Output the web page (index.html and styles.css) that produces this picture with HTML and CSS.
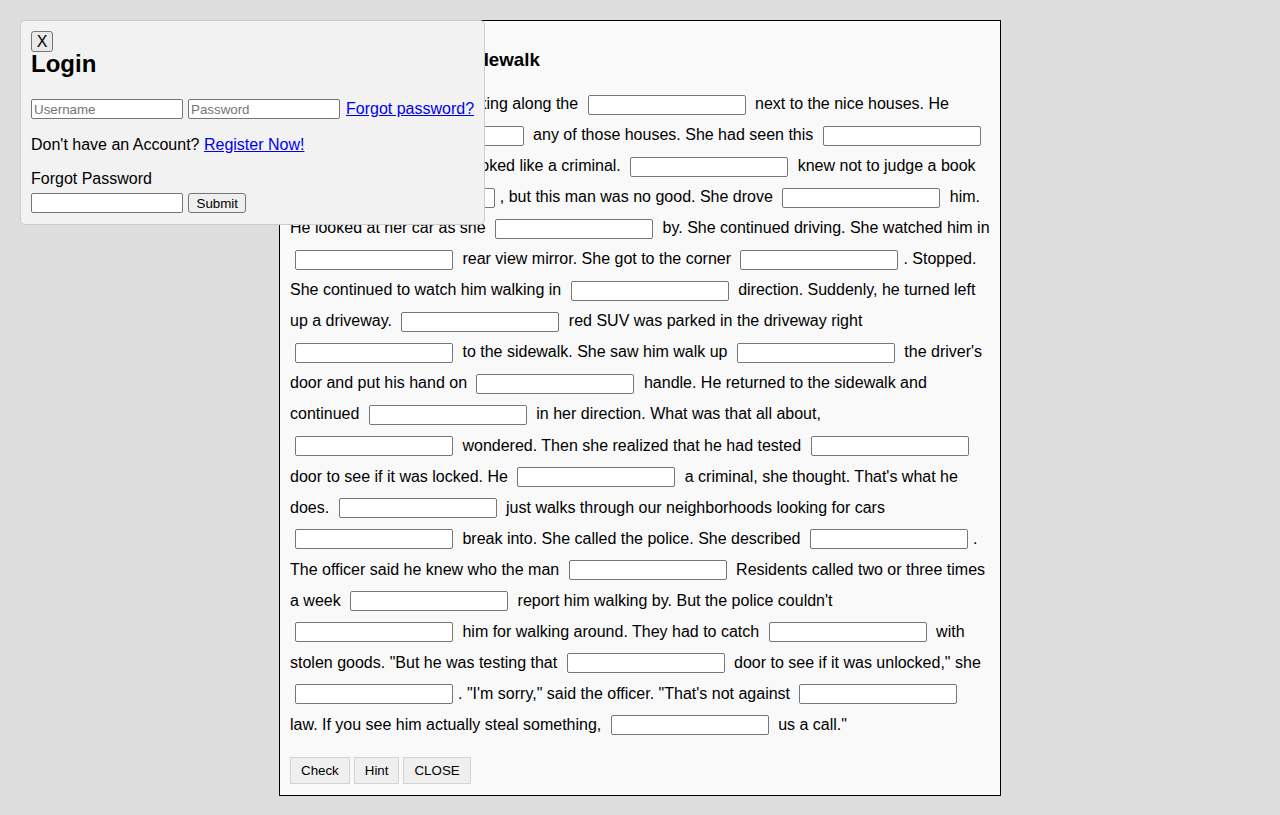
FILE: index.html
```html
<!DOCTYPE html>
<html lang="en">
<head>
<meta charset="utf-8">
<title>Story</title>
<link rel="stylesheet" href="styles.css">
</head>
<body>
<div class="panel">
  <h3 class="title">A Stranger On Our Sidewalk</h3>
  <p class="story">Mrs. Jones saw a man walking along the <input class="blank" type="text"> next to the nice houses. He didn't live <input class="blank" type="text"> any of those houses. She had seen this <input class="blank" type="text"> several times before. He looked like a criminal. <input class="blank" type="text"> knew not to judge a book by its <input class="blank" type="text">, but this man was no good. She drove <input class="blank" type="text"> him. He looked at her car as she <input class="blank" type="text"> by. She continued driving. She watched him in <input class="blank" type="text"> rear view mirror. She got to the corner <input class="blank" type="text">. Stopped. She continued to watch him walking in <input class="blank" type="text"> direction. Suddenly, he turned left up a driveway. <input class="blank" type="text"> red SUV was parked in the driveway right <input class="blank" type="text"> to the sidewalk. She saw him walk up <input class="blank" type="text"> the driver's door and put his hand on <input class="blank" type="text"> handle. He returned to the sidewalk and continued <input class="blank" type="text"> in her direction. What was that all about, <input class="blank" type="text"> wondered. Then she realized that he had tested <input class="blank" type="text"> door to see if it was locked. He <input class="blank" type="text"> a criminal, she thought. That's what he does. <input class="blank" type="text"> just walks through our neighborhoods looking for cars <input class="blank" type="text"> break into. She called the police. She described <input class="blank" type="text">. The officer said he knew who the man <input class="blank" type="text"> Residents called two or three times a week <input class="blank" type="text"> report him walking by. But the police couldn't <input class="blank" type="text"> him for walking around. They had to catch <input class="blank" type="text"> with stolen goods. "But he was testing that <input class="blank" type="text"> door to see if it was unlocked," she <input class="blank" type="text">. "I'm sorry," said the officer. "That's not against <input class="blank" type="text"> law. If you see him actually steal something, <input class="blank" type="text"> us a call."</p>
  <div class="actions">
    <button class="act" type="button">Check</button>
    <button class="act" type="button">Hint</button>
    <button class="act" type="button">CLOSE</button>
  </div>
</div>

<div class="login">
  <button class="x-btn" type="button">X</button>
  <h2 class="login-title">Login</h2>
  <div class="login-row">
    <input class="field" type="text" placeholder="Username">
    <input class="field" type="password" placeholder="Password">
    <a class="link" href="#">Forgot password?</a>
  </div>
  <p class="account">Don't have an Account? <a class="link" href="#">Register Now!</a></p>
  <div class="fp-label">Forgot Password</div>
  <div class="fp-row">
    <input class="field" type="text">
    <button class="submit" type="button">Submit</button>
  </div>
</div>
</body>
</html>
```

FILE: styles.css
```css
html, body {
  margin: 0;
  padding: 0;
}
body {
  background: #dddddd;
  font-family: "Liberation Sans", Arial, sans-serif;
  font-size: 16px;
  color: #000;
  padding-top: 20px;
  min-height: 795px;
  box-sizing: border-box;
}

.panel {
  width: 700px;
  margin: 0 auto;
  padding: 10px 10px 11px;
  border: 1px solid #000;
  background: #f9f9f9;
}
.title {
  font-size: 18.72px;
  line-height: 22px;
  margin: 17.5px 0 17.5px;
  font-weight: bold;
}
.story {
  margin: 0 0 17.3px;
  line-height: 31.05px;
}
.blank {
  box-sizing: border-box;
  width: 158px;
  height: 20px;
  margin: 0 5px;
  padding: 1px 2px;
  border: 1px solid #767676;
  border-radius: 2px;
  background: #fff;
  font-family: "Liberation Sans", Arial, sans-serif;
  font-size: 13.33px;
}
.actions {
  display: flex;
  gap: 4px;
}
.act {
  font-family: "Liberation Sans", Arial, sans-serif;
  font-size: 13.33px;
  line-height: 15px;
  padding: 5px 10px;
  border: 1px solid #d3d3d3;
  border-radius: 0;
  background: #efefef;
  color: #000;
}

.login {
  position: absolute;
  left: 20px;
  top: 20px;
  padding: 10px 10px 11px;
  border: 1px solid #cccccc;
  border-radius: 5px;
  background: #f2f2f2;
}
.x-btn {
  display: block;
  box-sizing: border-box;
  width: 22px;
  height: 21px;
  padding: 0;
  border: 1px solid #767676;
  border-radius: 3px;
  background: #e9e9e9;
  font-family: "Liberation Sans", Arial, sans-serif;
  font-size: 16px;
  line-height: 19px;
  color: #000;
}
.login-title {
  font-size: 24px;
  line-height: 27px;
  margin: -2px 0 22px;
  font-weight: bold;
}
.login-row, .fp-row {
  display: flex;
  align-items: center;
  gap: 5px;
  height: 20px;
}
.field {
  box-sizing: border-box;
  width: 152px;
  height: 20px;
  margin: 0;
  padding: 1px 2px;
  border: 1px solid #767676;
  border-radius: 2px;
  background: #fff;
  font-family: "Liberation Sans", Arial, sans-serif;
  font-size: 13.33px;
}
.field::placeholder {
  color: #757575;
}
.login-row .link {
  margin-left: 1px;
}
.link {
  color: #0000ee;
  text-decoration: underline;
  white-space: nowrap;
}
.account {
  margin: 17px 0 0;
  line-height: 18px;
}
.fp-label {
  margin-top: 16px;
  line-height: 18px;
}
.fp-row {
  margin-top: 5px;
}
.submit {
  box-sizing: border-box;
  height: 20px;
  padding: 0 7.5px;
  border: 1px solid #767676;
  border-radius: 3px;
  background: #efefef;
  font-family: "Liberation Sans", Arial, sans-serif;
  font-size: 13.33px;
  color: #000;
}
```
